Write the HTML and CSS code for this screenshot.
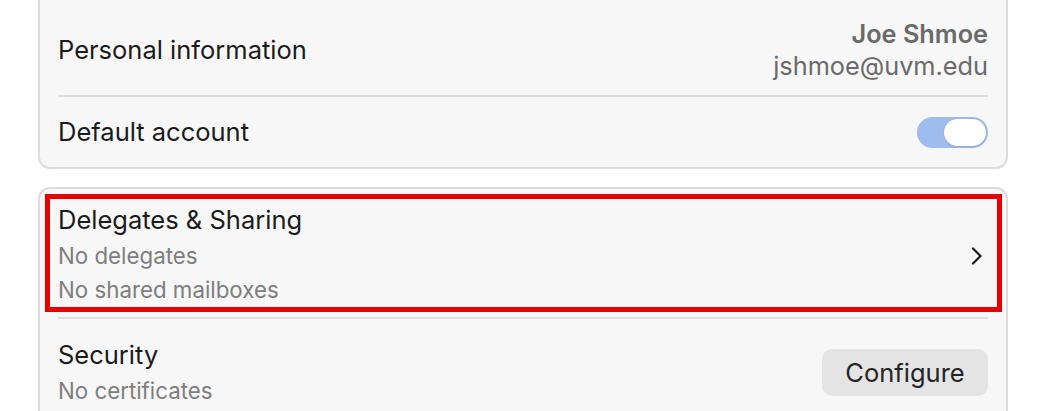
FILE: index.html
```html
<!DOCTYPE html>
<html>
<head>
<meta charset="utf-8">
<link rel="stylesheet" href="styles.css">
</head>
<body>
<div class="page">
  <section class="card card-first">
    <div class="row row-personal">
      <div class="title">Personal information</div>
      <div class="ident">
        <div class="ident-name">Joe Shmoe</div>
        <div class="ident-mail">jshmoe@uvm.edu</div>
      </div>
    </div>
    <div class="sep"></div>
    <div class="row row-default">
      <div class="title">Default account</div>
      <div class="toggle"><div class="knob"></div></div>
    </div>
  </section>

  <section class="card">
    <div class="row row-delegates">
      <div class="stack">
        <div class="title">Delegates &amp; Sharing</div>
        <div class="sub">No delegates</div>
        <div class="sub">No shared mailboxes</div>
      </div>
      <svg class="chev" width="12" height="18" viewBox="0 0 12 18"><path d="M2 1.5 L9.5 9 L2 16.5" fill="none" stroke="#1c1c1c" stroke-width="2.2" stroke-linecap="round" stroke-linejoin="round"/></svg>
      <div class="highlight"></div>
    </div>
    <div class="sep"></div>
    <div class="row row-security">
      <div class="stack">
        <div class="title">Security</div>
        <div class="sub">No certificates</div>
      </div>
      <button class="btn">Configure</button>
    </div>
  </section>
</div>
</body>
</html>
```

FILE: styles.css
```css
html, body {
  margin: 0;
  padding: 0;
  background: #ffffff;
  overflow: hidden;
}

body {
  font-family: "Inter", "Liberation Sans", sans-serif;
  color: #1d1d1d;
  -webkit-font-smoothing: antialiased;
}

.page {
  display: flex;
  flex-direction: column;
  gap: 18px;
  padding: 0 36px 0 38px;
}

.card {
  background: #f7f7f7;
  border: 2px solid #dcdcdc;
  border-radius: 12px;
  padding: 0 18px;
}

.card-first {
  margin-top: -20px;
}

.sep {
  height: 2px;
  background: #dedede;
}

.row {
  display: flex;
  align-items: center;
  justify-content: space-between;
  position: relative;
}

.title {
  font-size: 25.5px;
  line-height: 38px;
  color: #1b1b1b;
}

.sub {
  font-size: 22.3px;
  line-height: 34px;
  color: #7e7e7e;
}

.row-personal {
  padding: 36px 0 13px;
}

.ident {
  text-align: right;
  font-size: 25.3px;
  line-height: 32px;
  color: #6a6a6a;
}

.ident-name {
  font-weight: 600;
}

.row-default {
  padding: 16px 0 16px;
}

.toggle {
  width: 71px;
  height: 31px;
  border-radius: 16px;
  background: #9fbcef;
  display: flex;
  justify-content: flex-end;
  align-items: center;
  padding: 0 2px;
  box-sizing: border-box;
}

.knob {
  width: 42px;
  height: 27px;
  border-radius: 14px;
  background: #ffffff;
  box-shadow: 0 0.5px 2px rgba(0, 0, 0, 0.18);
}

.row-delegates {
  padding: 12px 0 10px;
}

.chev {
  margin: 3px 5px 0 0;
}

.highlight {
  position: absolute;
  top: 5px;
  bottom: 5px;
  left: -13px;
  right: -14px;
  border: 5px solid #e60000;
  pointer-events: none;
}

.row-security {
  padding: 17px 0 16px;
}

.btn {
  font-family: inherit;
  font-size: 25.5px;
  color: #242424;
  background: #e4e4e4;
  border: none;
  border-radius: 10px;
  width: 166px;
  height: 47px;
  padding: 0;
}
```
